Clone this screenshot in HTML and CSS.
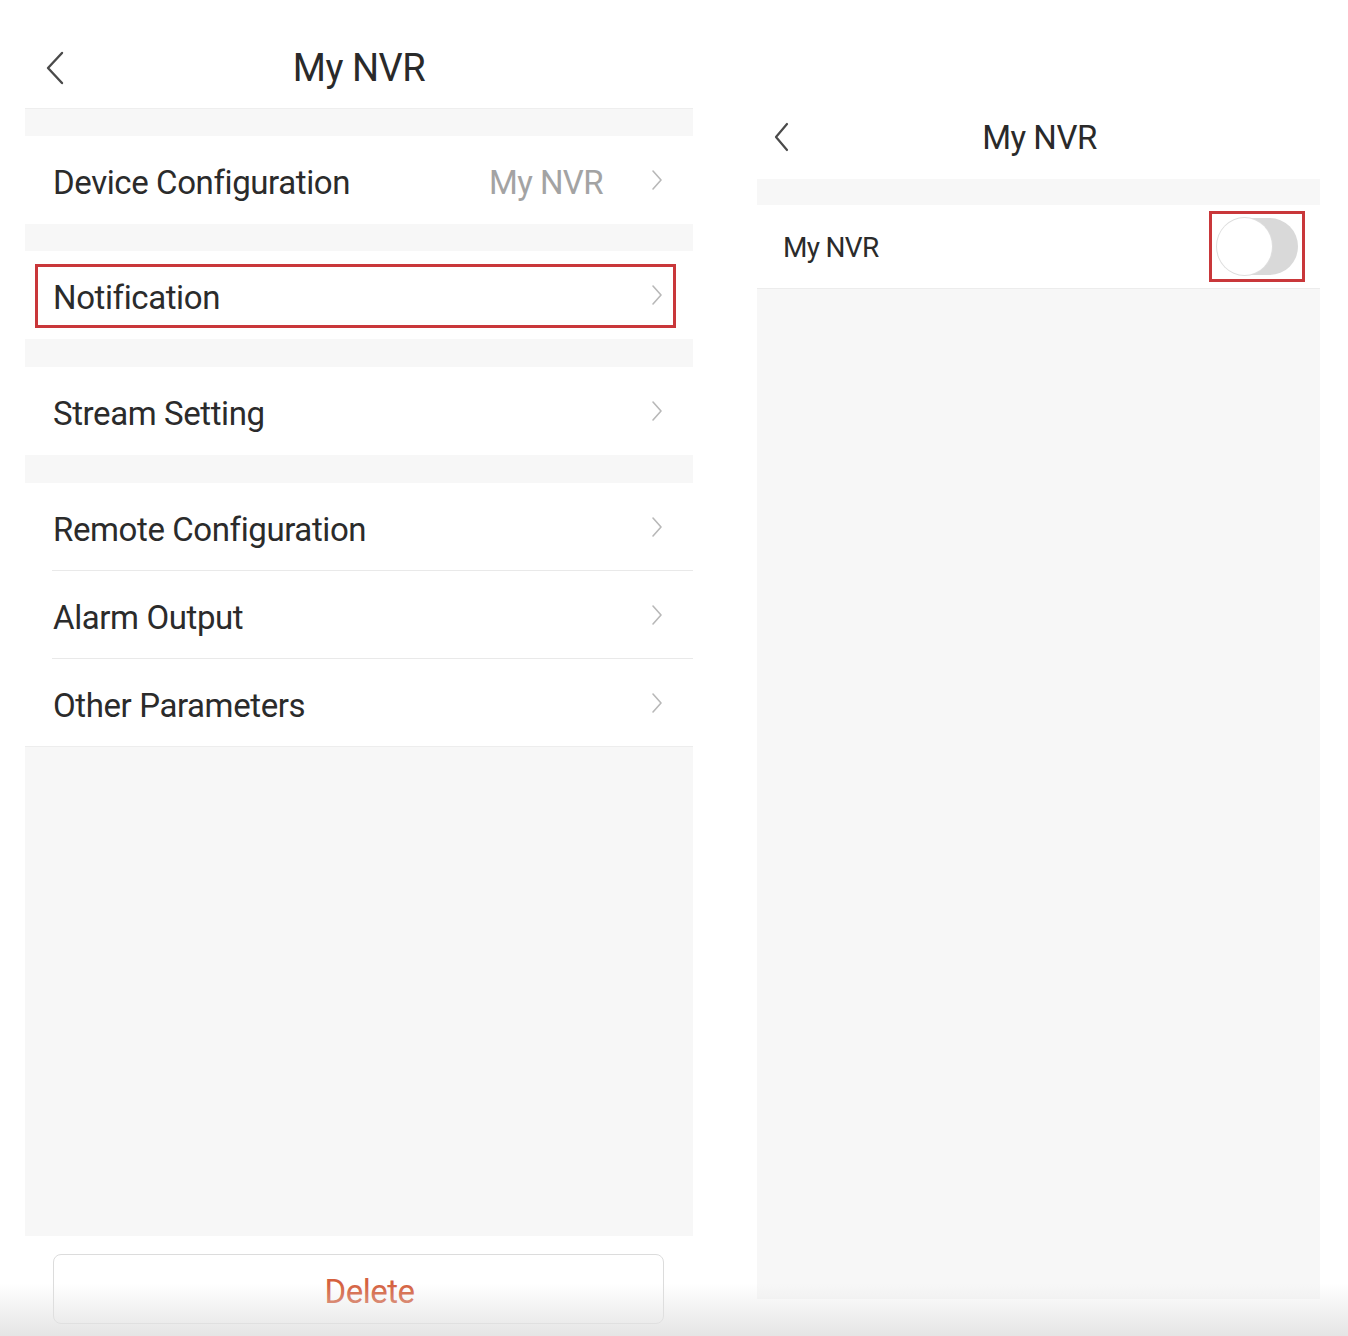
FILE: index.html
```html
<!DOCTYPE html>
<html lang="en">
<head>
<meta charset="utf-8">
<title>My NVR</title>
<link rel="stylesheet" href="styles.css">
</head>
<body>
<div class="screen">
  <section class="panel panel-left">
    <header class="nav nav-left">
      <svg class="back" width="20" height="34" viewBox="0 0 20 34"><path d="M17 2 L3 17 L17 32" fill="none" stroke="#4a4a4a" stroke-width="2.4" stroke-linecap="round" stroke-linejoin="round"/></svg>
      <h1 class="title">My NVR</h1>
    </header>
    <div class="gap"></div>
    <div class="row">
      <span class="label">Device Configuration</span>
      <span class="value">My NVR</span>
      <svg class="chev" width="12" height="22" viewBox="0 0 12 22"><path d="M2 2 L10 11 L2 20" fill="none" stroke="#b8b8b8" stroke-width="1.6" stroke-linecap="round" stroke-linejoin="round"/></svg>
    </div>
    <div class="gap"></div>
    <div class="row">
      <span class="label">Notification</span>
      <svg class="chev" width="12" height="22" viewBox="0 0 12 22"><path d="M2 2 L10 11 L2 20" fill="none" stroke="#b8b8b8" stroke-width="1.6" stroke-linecap="round" stroke-linejoin="round"/></svg>
      <div class="highlight hl-notify"></div>
    </div>
    <div class="gap gap-28"></div>
    <div class="row">
      <span class="label">Stream Setting</span>
      <svg class="chev" width="12" height="22" viewBox="0 0 12 22"><path d="M2 2 L10 11 L2 20" fill="none" stroke="#b8b8b8" stroke-width="1.6" stroke-linecap="round" stroke-linejoin="round"/></svg>
    </div>
    <div class="gap gap-28"></div>
    <div class="group">
      <div class="row row-div">
        <span class="label">Remote Configuration</span>
        <svg class="chev" width="12" height="22" viewBox="0 0 12 22"><path d="M2 2 L10 11 L2 20" fill="none" stroke="#b8b8b8" stroke-width="1.6" stroke-linecap="round" stroke-linejoin="round"/></svg>
      </div>
      <div class="row row-div">
        <span class="label">Alarm Output</span>
        <svg class="chev" width="12" height="22" viewBox="0 0 12 22"><path d="M2 2 L10 11 L2 20" fill="none" stroke="#b8b8b8" stroke-width="1.6" stroke-linecap="round" stroke-linejoin="round"/></svg>
      </div>
      <div class="row row-div">
        <span class="label">Other Parameters</span>
        <svg class="chev" width="12" height="22" viewBox="0 0 12 22"><path d="M2 2 L10 11 L2 20" fill="none" stroke="#b8b8b8" stroke-width="1.6" stroke-linecap="round" stroke-linejoin="round"/></svg>
      </div>
    </div>
    <div class="fill fill-left"></div>
    <div class="footer">
      <button class="delete">Delete</button>
    </div>
  </section>

  <section class="panel panel-right">
    <header class="nav nav-right">
      <svg class="back back-sm" width="16" height="30" viewBox="0 0 16 30"><path d="M14 2 L3 15 L14 28" fill="none" stroke="#4a4a4a" stroke-width="2.2" stroke-linecap="round" stroke-linejoin="round"/></svg>
      <h1 class="title title-sm">My NVR</h1>
    </header>
    <div class="gap gap-26"></div>
    <div class="row row-sm">
      <span class="label label-sm">My NVR</span>
      <div class="toggle"><span class="knob"></span></div>
      <div class="highlight hl-toggle"></div>
    </div>
    <div class="fill fill-right"></div>
  </section>
</div>
<div class="bottom-shade"></div>
</body>
</html>
```

FILE: styles.css
```css
html, body {
  margin: 0;
  padding: 0;
}
body {
  width: 1348px;
  height: 1336px;
  background: #ffffff;
  font-family: Roboto, "Liberation Sans", Arial, sans-serif;
  color: #2b2b2b;
  position: relative;
  overflow: hidden;
}
.screen {
  display: flex;
  align-items: flex-start;
  padding-left: 25px;
  gap: 64px;
}
.panel {
  display: flex;
  flex-direction: column;
  background: #fff;
}
.panel-left { width: 668px; }
.panel-right { width: 563px; }

.nav {
  position: relative;
  display: flex;
  justify-content: center;
  align-items: flex-start;
  box-sizing: border-box;
}
.nav-left {
  height: 109px;
  padding-top: 46px;
  border-bottom: 1px solid #eeeeee;
}
.nav-right {
  height: 179px;
  padding-top: 118px;
}
.back {
  position: absolute;
  left: 20px;
  top: 51px;
}
.back-sm {
  left: 16px;
  top: 122px;
}
.title {
  margin: 0;
  font-weight: 400;
  font-size: 38px;
  line-height: 44px;
  letter-spacing: -0.5px;
  color: #2a2a2a;
}
.title-sm {
  font-size: 33px;
  line-height: 40px;
  transform: translateX(1px);
}

.gap {
  height: 27px;
  background: #f7f7f7;
}
.gap-28 { height: 28px; }
.gap-26 { height: 26px; }

.row {
  position: relative;
  height: 88px;
  display: flex;
  align-items: center;
  padding: 0 30px 0 28px;
  background: #fff;
  box-sizing: border-box;
}
.row-div::after {
  content: "";
  position: absolute;
  left: 27px;
  right: 0;
  bottom: 0;
  height: 1px;
  background: #e9e9e9;
}
.group .row:last-child::after {
  left: 0;
  background: #ededed;
}
.label {
  flex: 1;
  font-size: 33px;
  letter-spacing: -0.4px;
  color: #2b2b2b;
  padding-top: 4px;
}
.value {
  font-size: 33px;
  letter-spacing: -0.6px;
  color: #a3a3a3;
  margin-right: 48px;
  padding-top: 4px;
}
.chev { flex: none; margin-top: 0; }

.highlight {
  position: absolute;
  border: 3px solid #c9373a;
  box-sizing: border-box;
  pointer-events: none;
}
.hl-notify {
  left: 10px;
  top: 13px;
  width: 641px;
  height: 64px;
}

.fill { background: #f7f7f7; }
.fill-left { height: 489px; }
.fill-right { height: 1010px; }

.footer {
  height: 100px;
  padding: 18px 29px 0 28px;
  box-sizing: border-box;
}
.delete {
  display: block;
  width: 611px;
  height: 70px;
  border: 1px solid #dcdcdc;
  border-radius: 8px;
  background: #fff;
  font-family: Roboto, "Liberation Sans", Arial, sans-serif;
  font-size: 33px;
  color: #d5613f;
  letter-spacing: -0.5px;
  padding: 4px 0 0 22px;
}

.row-sm {
  height: 84px;
  padding: 0 22px 0 26px;
  border-bottom: 1px solid #ececec;
}
.label-sm {
  font-size: 28px;
  letter-spacing: -0.7px;
  padding-top: 2px;
}
.toggle {
  width: 81px;
  height: 57px;
  border-radius: 29px;
  background: #d9d9d9;
  position: relative;
  flex: none;
}
.knob {
  position: absolute;
  left: 0;
  top: 0;
  width: 55px;
  height: 57px;
  border-radius: 50%;
  background: #fff;
  box-shadow: 0 0 0 1px #dedede;
}
.hl-toggle {
  right: 15px;
  top: 6px;
  width: 96px;
  height: 71px;
}

.bottom-shade {
  position: absolute;
  left: 0;
  right: 0;
  bottom: 0;
  height: 52px;
  background: linear-gradient(to bottom, rgba(230,230,230,0), rgba(226,226,226,0.9));
  pointer-events: none;
}
```
